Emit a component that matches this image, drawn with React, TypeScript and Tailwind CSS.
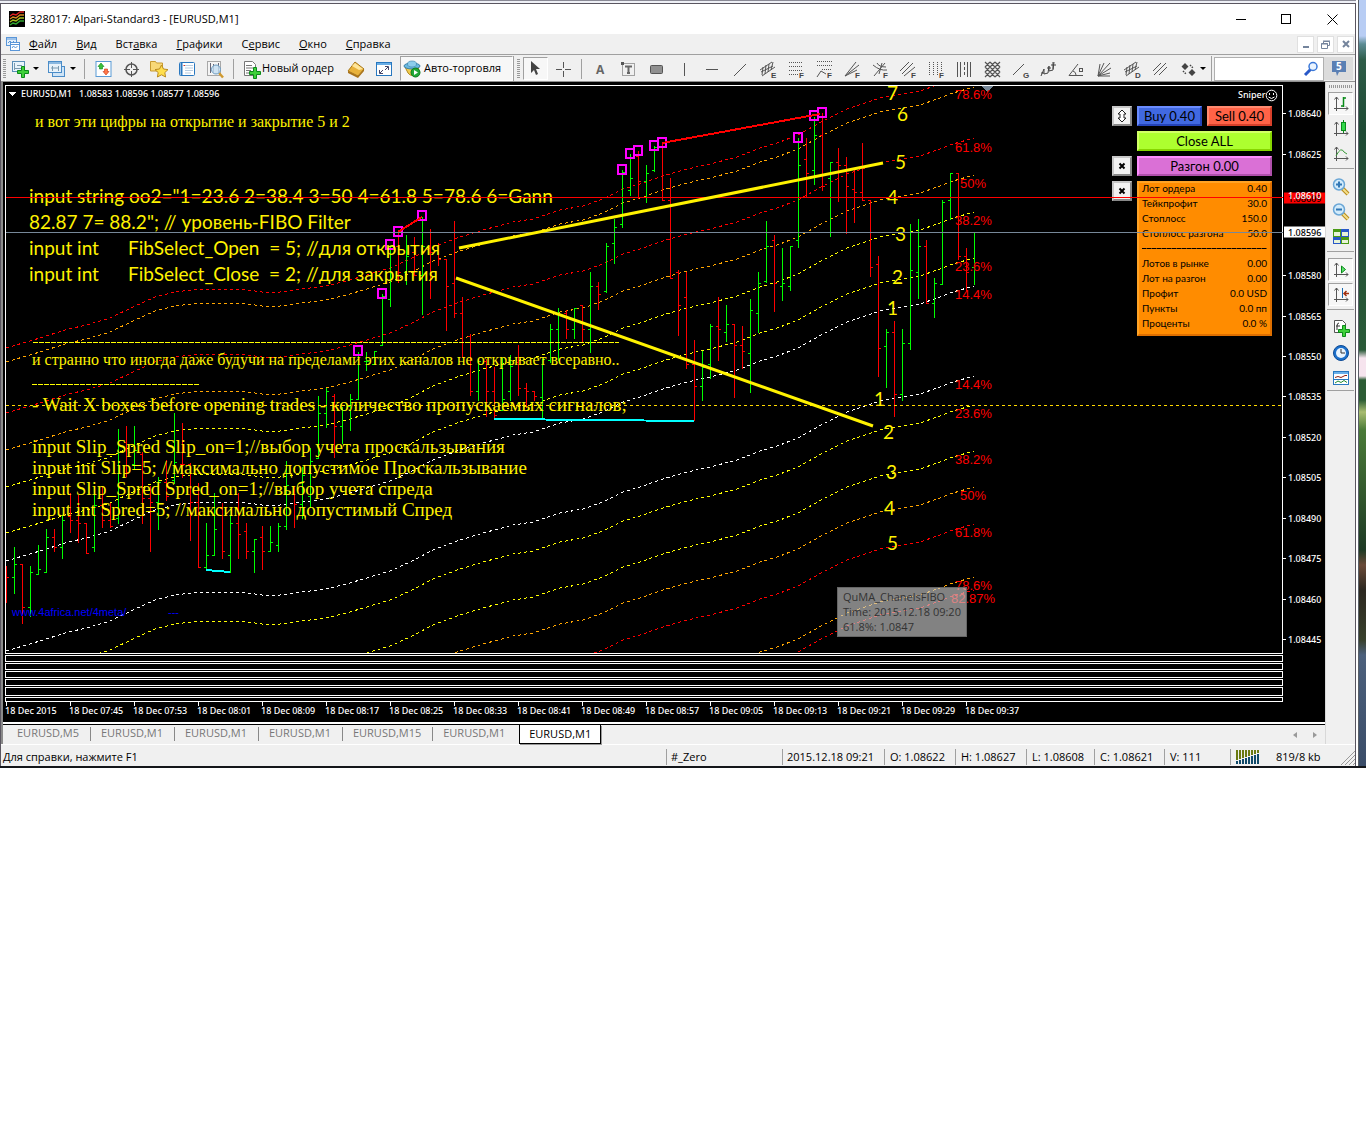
import React from "react";

/* ---------- chart data (canvas coordinates) ---------- */

const BASE: [number, number][] = [
  [6, 651], [40, 641], [65, 633], [90, 627], [110, 621], [135, 609], [155, 600], [175, 595], [200, 592], [218, 592],
  [240, 592], [262, 595], [280, 595], [300, 592], [320, 590], [343, 585], [370, 577], [390, 571], [410, 562],
  [433, 550], [457, 541], [483, 533], [513, 525], [533, 522], [560, 513], [583, 509], [603, 502], [623, 492],
  [640, 487], [660, 480], [683, 473], [710, 467], [737, 460], [760, 451], [780, 445], [800, 437], [823, 424],
  [847, 412], [880, 401], [920, 394], [940, 387], [953, 382], [974, 376],
];

const CHANNELS: [number, string][] = [
  [-303, "#f00"], [-289, "#ffa500"], [-238, "#f00"], [-201, "#ffa500"], [-164, "#ff0"], [-118, "#ff0"], [-90, "#fff"],
  [0, "#fff"], [29, "#ff0"], [75, "#ff0"], [111, "#ffa500"], [148, "#f00"], [201, "#ffa500"], [214, "#f00"],
];

/* colour, high, low, open, close; one bar every 8px */
type Bar = ["r" | "g", number, number, number, number];
const BARS: Bar[] = [
  ["r", 566, 602, 566, 577], ["g", 547, 593, 577, 564], ["r", 564, 623, 564, 607], ["g", 566, 616, 607, 572],
  ["g", 545, 574, 574, 569], ["g", 529, 572, 572, 537], ["r", 529, 551, 537, 547], ["g", 515, 558, 547, 520],
  ["r", 493, 532, 516, 520], ["r", 495, 542, 520, 523], ["r", 523, 553, 523, 553], ["g", 486, 551, 547, 505],
  ["r", 487, 527, 505, 520], ["r", 503, 527, 520, 526], ["g", 429, 523, 518, 440], ["r", 426, 476, 442, 472],
  ["g", 426, 468, 464, 450], ["r", 452, 523, 454, 498], ["r", 486, 551, 498, 502], ["g", 477, 529, 502, 482],
  ["r", 460, 500, 482, 496], ["g", 413, 483, 480, 462], ["r", 423, 477, 464, 464], ["r", 463, 540, 464, 502],
  ["r", 483, 567, 502, 567], ["g", 523, 569, 567, 555], ["g", 493, 555, 555, 529], ["r", 503, 558, 508, 551],
  ["g", 515, 572, 555, 523], ["r", 493, 558, 523, 534], ["r", 523, 558, 531, 551], ["g", 539, 572, 551, 539],
  ["r", 526, 569, 537, 551], ["g", 526, 551, 551, 542], ["g", 523, 551, 545, 526], ["g", 461, 529, 526, 485],
  ["r", 486, 527, 486, 504], ["g", 467, 518, 504, 475], ["g", 448, 507, 496, 461], ["g", 396, 458, 458, 413],
  ["g", 388, 427, 413, 391], ["r", 394, 457, 396, 426], ["g", 407, 443, 426, 410], ["g", 394, 430, 406, 399],
  ["g", 352, 399, 399, 354], ["g", 352, 370, 361, 361], ["g", 351, 364, 364, 351], ["g", 294, 345, 345, 296],
  ["g", 246, 306, 299, 246], ["r", 232, 282, 246, 272], ["g", 235, 284, 272, 256], ["r", 237, 275, 252, 275],
  ["g", 217, 314, 275, 246], ["r", 229, 298, 246, 252], ["r", 243, 265, 250, 259], ["r", 259, 330, 259, 286],
  ["r", 221, 317, 283, 313], ["r", 297, 357, 313, 357], ["r", 334, 395, 336, 391], ["g", 359, 400, 391, 361],
  ["r", 359, 416, 361, 391], ["r", 367, 418, 391, 415], ["g", 358, 410, 410, 399], ["g", 355, 400, 391, 366],
  ["r", 345, 395, 362, 388], ["r", 383, 407, 388, 391], ["r", 391, 400, 391, 396], ["g", 359, 418, 397, 359],
  ["g", 324, 362, 360, 329], ["g", 308, 360, 329, 315], ["r", 310, 338, 313, 329], ["g", 308, 338, 329, 308],
  ["r", 305, 341, 305, 329], ["g", 272, 352, 329, 286], ["r", 282, 309, 286, 294], ["g", 243, 292, 291, 246],
  ["g", 219, 263, 243, 227], ["g", 170, 227, 224, 172], ["g", 154, 195, 190, 178], ["r", 151, 198, 156, 181],
  ["g", 165, 202, 181, 173], ["g", 146, 171, 170, 147], ["r", 143, 200, 147, 200], ["r", 178, 278, 200, 278],
  ["r", 270, 335, 272, 305], ["r", 272, 368, 297, 364], ["r", 340, 420, 364, 386], ["g", 351, 400, 386, 367],
  ["g", 324, 378, 364, 326], ["r", 297, 360, 326, 329], ["g", 305, 341, 332, 324], ["r", 324, 397, 324, 345],
  ["r", 326, 368, 345, 351], ["g", 299, 392, 353, 310], ["g", 272, 332, 313, 283], ["g", 221, 282, 281, 246],
  ["r", 235, 311, 240, 283], ["g", 248, 300, 286, 283], ["g", 246, 290, 286, 246], ["g", 138, 247, 240, 165],
  ["r", 138, 197, 159, 173], ["g", 117, 184, 170, 135], ["r", 113, 190, 135, 186], ["g", 162, 236, 178, 162],
  ["r", 148, 201, 162, 165], ["r", 157, 233, 165, 186], ["r", 168, 222, 189, 192], ["r", 143, 200, 192, 200],
  ["r", 200, 276, 200, 267], ["r", 256, 376, 264, 348], ["g", 329, 387, 346, 332], ["r", 321, 416, 332, 394],
  ["g", 329, 400, 394, 343], ["g", 224, 349, 343, 270], ["g", 219, 298, 272, 246], ["r", 240, 303, 246, 303],
  ["g", 278, 317, 303, 283], ["g", 200, 284, 284, 202], ["g", 173, 219, 200, 173], ["r", 173, 259, 173, 256],
  ["r", 248, 290, 256, 272], ["g", 232, 284, 267, 232],
];

const BOXES: [number, number][] = [
  [358, 351], [382, 294], [390, 245], [398, 232], [422, 216], [622, 170], [630, 154], [638, 151], [654, 146],
  [662, 143], [798, 138], [814, 116], [822, 113],
];

const SUBWINDOWS: [number, number][] = [[655, 6], [663, 6], [671, 6], [679, 6], [687, 8], [697, 4]];

const PRICES: [string, number][] = [
  ["1.08640", 113], ["1.08625", 154], ["1.08580", 275], ["1.08565", 316], ["1.08550", 356],
  ["1.08535", 396], ["1.08520", 437], ["1.08505", 477], ["1.08490", 518], ["1.08475", 558], ["1.08460", 599], ["1.08445", 639],
];

const DATES = [
  "18 Dec 2015", "18 Dec 07:45", "18 Dec 07:53", "18 Dec 08:01", "18 Dec 08:09", "18 Dec 08:17", "18 Dec 08:25",
  "18 Dec 08:33", "18 Dec 08:41", "18 Dec 08:49", "18 Dec 08:57", "18 Dec 09:05", "18 Dec 09:13", "18 Dec 09:21",
  "18 Dec 09:29", "18 Dec 09:37",
];

const LEVELS: [string, number, number][] = [
  ["78.6%", 955, 94], ["61.8%", 955, 147], ["50%", 960, 183], ["38.2%", 955, 220], ["23.6%", 955, 266],
  ["14.4%", 955, 294], ["14.4%", 955, 384], ["23.6%", 955, 413], ["38.2%", 955, 459], ["50%", 960, 495],
  ["61.8%", 955, 532], ["78.6%", 955, 585], ["82.87%", 951, 598],
];

const MARKS: [string, number, number][] = [
  ["7", 887, 92], ["6", 897, 113], ["5", 895, 161], ["4", 887, 196], ["3", 895, 233], ["2", 892, 276], ["1", 887, 307],
  ["1", 874, 398], ["2", 883, 431], ["3", 886, 471], ["4", 884, 507], ["5", 887, 542],
];

const calibri = "font-['Lato','Open_Sans',sans-serif]";
const serif = "font-['Liberation_Serif',serif]";
const small = "font-['Noto_Sans',sans-serif] text-[9px] font-medium";

const OX = 3;
const OY = 82;

function Label({ x, y, className, children }: { x: number; y: number; className: string; children: React.ReactNode }) {
  return (
    <span
      className={`absolute -translate-y-1/2 whitespace-pre leading-none ${className}`}
      style={{ left: x - OX, top: y - OY }}
    >
      {children}
    </span>
  );
}

function ChartPlot() {
  return (
    <svg className="absolute top-0 left-0" width="1322" height="640" viewBox="3 82 1322 640" shapeRendering="crispEdges">
      <defs>
        <clipPath id="plot"><rect x="6" y="86" width="1276" height="567" /></clipPath>
      </defs>
      <g clipPath="url(#plot)">
        <g fill="none" strokeDasharray="3 3">
          {CHANNELS.map(([o, c]) => (
            <polyline key={o} stroke={c} points={BASE.map(([x, y]) => `${x},${y + o}`).join(" ")} />
          ))}
        </g>
        {BARS.map(([c, h, l, o, cl], i) => {
          const x = 6 + i * 8;
          return (
            <path key={i} fill={c === "r" ? "#f00" : "#0f0"}
              d={`M${x} ${h}h1v${l - h + 1}h-1zM${x - 2} ${o}h2v1h-2zM${x + 1} ${cl}h2v1h-2z`} />
          );
        })}
        <g fill="none" stroke="#f0f" strokeWidth="2">
          {BOXES.map(([x, y]) => <rect key={x} x={x - 4} y={y - 5} width="8" height="9" />)}
        </g>
        <path d="M398 232L422 217M662 143L820 114" stroke="#f00" strokeWidth="2" />
        <path d="M494 419L694 421M206 570L230 572" stroke="#0ff" strokeWidth="2" />
      </g>
      <path d="M981 86h12l-6 6z" fill="#778899" />
      <g fill="none" stroke="#fff">
        <rect x="5.5" y="85.5" width="1277" height="568" />
        {SUBWINDOWS.map(([y, h]) => <rect key={y} x="5.5" y={y + 0.5} width="1277" height={h} />)}
        {PRICES.map(([p, y]) => <path key={p} d={`M1283 ${y + 0.5}h3`} />)}
        {DATES.map((d, i) => <path key={d} d={`M${6.5 + i * 64} 702v4`} />)}
      </g>
      <path d="M9 92h7l-3.500 4z" fill="#fff" />
    </svg>
  );
}

function ChartLines() {
  return (
    <svg className="pointer-events-none absolute top-0 left-0" width="1322" height="640" viewBox="3 82 1322 640">
      <g shapeRendering="crispEdges">
        <path d="M6 197.500H1283" stroke="#f00" />
        <path d="M6 232.500H1283" stroke="#778899" />
        <path d="M6 405.500H1283" stroke="#ffd700" strokeDasharray="3 3" />
        <path d="M33 342.500H619" stroke="#ff0" strokeDasharray="5 1" />
        <path d="M32 384.500H200" stroke="#ff0" strokeDasharray="5 1" />
      </g>
      <path d="M459 248L883 163M456 278L873 426" stroke="#fff200" strokeWidth="3" />
    </svg>
  );
}

const INFO: [string, string][] = [
  ["Лот ордера", "0.40"], ["Тейкпрофит", "30.0"], ["Стоплосс", "150.0"], ["Стоплосс разгона", "50.0"], ["", ""],
  ["Лотов в рынке", "0.00"], ["Лот на разгон", "0.00"], ["Профит", "0.0 USD"], ["Пункты", "0.0 пп"], ["Проценты", "0.0 %"],
];

function TradePanel() {
  const btn = "h-5 border-2 text-[13px] leading-none text-black";
  const mini = "flex h-5 w-5 items-center justify-center border-2 border-[#c8c8c8] border-r-[#888] border-b-[#888] bg-[#f2f2f2] text-black";
  const x = (
    <svg width="8" height="8" viewBox="0 0 8 8" stroke="#000" strokeWidth="2"><path d="M1.500 1.500l5 5M6.500 1.500l-5 5" /></svg>
  );
  return (
    <div className={`absolute top-6 left-[1109px] grid grid-cols-[20px_135px] gap-x-[5px] gap-y-[5px] ${calibri}`}>
      <button aria-label="Переместить" className={mini}>
        <svg width="12" height="14" viewBox="0 0 12 14" fill="#fff" stroke="#222"><path d="M6 1l4 4H8v4h2l-4 4-4-4h2V5H2z" /></svg>
      </button>
      <div className="grid grid-cols-2 gap-[5px]">
        <button className={`${btn} border-[#6a8cff] border-r-[#2443b8] border-b-[#2443b8] bg-[#4169e1]`}>Buy 0.40</button>
        <button className={`${btn} border-[#ff8a70] border-r-[#d8402a] border-b-[#d8402a] bg-[#ff6347]`}>Sell 0.40</button>
      </div>
      <span />
      <button className={`${btn} border-[#d2ff66] border-r-[#86d600] border-b-[#86d600] bg-[#adff2f]`}>Close ALL</button>
      <button aria-label="Скрыть разгон" className={mini}>{x}</button>
      <button className={`${btn} border-[#ff8cff] border-r-[#b050ac] border-b-[#b050ac] bg-[#da70d6]`}>Разгон 0.00</button>
      <button aria-label="Скрыть сведения" className={mini}>{x}</button>
      <div className="h-[155px] border-2 border-[#ffa326] border-r-[#de6f00] border-b-[#de6f00] bg-[#ff8c00] px-[3px]">
        <table className="w-full border-collapse text-[10px] leading-none text-black">
          <tbody>
            {INFO.map(([k, v], i) =>
              k ? (
                <tr key={i} className="h-[15px]">
                  <td className="p-0 align-top whitespace-nowrap">{k}</td>
                  <td className="p-0 text-right align-top whitespace-nowrap">{v}</td>
                </tr>
              ) : (
                <tr key={i} className="h-[15px]">
                  <td colSpan={2} className="p-0 align-top">
                    <div className="mt-[5px] h-px bg-[repeating-linear-gradient(90deg,#000_0_4px,#7a4300_4px_5px)]" />
                  </td>
                </tr>
              )
            )}
          </tbody>
        </table>
      </div>
    </div>
  );
}

function Chart() {
  const big = `${calibri} text-[19px] text-[#fff200]`;
  const code = `${serif} text-[19px] text-[#fff200]`;
  return (
    <div className="relative h-[640px] min-w-0 flex-1 overflow-hidden bg-black">
      <ChartPlot />
      <Label x={21} y={93} className={`${small} text-white`}>EURUSD,M1   1.08583 1.08596 1.08577 1.08596</Label>
      <Label x={1238} y={94} className={`${small} text-white`}>Sniper</Label>
      <svg className="absolute top-[7px] left-[1262px]" width="13" height="13" viewBox="0 0 13 13" fill="none" stroke="#fff">
        <circle cx="6.500" cy="6.500" r="5.300" /><path d="M4.500 4v2M8.500 4v2M3.500 8q3 3 6 0" />
      </svg>
      {PRICES.map(([p, y]) => <Label key={p} x={1288} y={y} className={`${small} text-white`}>{p}</Label>)}
      <Label x={1284} y={198} className={`${small} w-[42px] bg-[#f00] py-px pl-1 text-black`}>1.08609</Label>
      <Label x={1288} y={195} className={`${small} text-white`}>1.08610</Label>
      <Label x={1284} y={232} className={`${small} w-[42px] bg-white py-px pl-1 text-black`}>1.08596</Label>
      {DATES.map((d, i) => <Label key={d} x={5 + i * 64} y={710} className={`${small} text-white`}>{d}</Label>)}
      {LEVELS.map(([t, x, y], i) => (
        <Label key={i} x={x} y={y} className="font-['Liberation_Sans',sans-serif] text-[13px] text-[#f00]">{t}</Label>
      ))}
      {MARKS.map(([t, x, y], i) => <Label key={i} x={x} y={y} className={big}>{t}</Label>)}
      <Label x={35} y={122} className={`${serif} text-[16px] text-[#fff200]`}>и вот эти цифры на открытие и закрытие 5 и 2</Label>
      <Label x={29} y={195} className={big}>{'input string oo2="1=23.6 2=38.4 3=50 4=61.8 5=78.6 6=Gann'}</Label>
      <Label x={29} y={221} className={big}>{'82.87 7= 88.2"; // уровень-FIBO Filter'}</Label>
      <Label x={29} y={247} className={big}>{"input int      FibSelect_Open  = 5; //для открытия"}</Label>
      <Label x={29} y={273} className={big}>{"input int      FibSelect_Close  = 2; //для закрытия"}</Label>
      <Label x={32} y={360} className={`${serif} text-[16px] text-[#fff200]`}>и странно что иногда даже будучи на пределами этих каналов не открывает всеравно..</Label>
      <Label x={32} y={404} className={code}>- Wait X boxes before opening trades - количество пропускаемых сигналов;</Label>
      <Label x={32} y={446} className={code}>input Slip_Spred Slip_on=1;//выбор учета проскальзывания</Label>
      <Label x={32} y={467} className={code}>input int Slip=5; //максимально допустимое Проскальзывание</Label>
      <Label x={32} y={488} className={code}>input Slip_Spred Spred_on=1;//выбор учета спреда</Label>
      <Label x={32} y={509} className={code}>input int Spred=5; //максимально допустимый Спред</Label>
      <Label x={12} y={612} className="font-['Liberation_Sans',sans-serif] text-[11px] text-[#00f]">www.4africa.net/4meta/</Label>
      <Label x={168} y={612} className="font-['Liberation_Sans',sans-serif] text-[11px] text-[#00f]">---</Label>
      <TradePanel />
      <ChartLines />
      <div className="absolute top-[505px] left-[834px] h-[50px] w-[130px] border border-[#666] bg-[#c8c8c8]/65 pt-px pl-[5px] font-['Open_Sans',sans-serif] text-[11px] leading-[15px] whitespace-nowrap text-[#333]">
        <div>QuMA_ChanelsFIBO</div>
        <div>Time: 2015.12.18 09:20</div>
        <div>61.8%: 1.0847</div>
      </div>
    </div>
  );
}

/* ---------- icons ---------- */

function Ico({ children, s = 20 }: { children: React.ReactNode; s?: number }) {
  return <svg width={s} height={s} viewBox="0 0 20 20" fill="none" className="shrink-0">{children}</svg>;
}

/* 11px plus badge; x, y is the top left corner of its upper arm */
const plus = (x: number, y: number) => (
  <path d={`M${x + 0.5} ${y + 0.5}h3v4h4v3h-4v4h-3v-4h-4v-3h4z`} fill="#3fd03a" stroke="#0b8a1a" />
);

const glyph = (t: string) => (
  <text x="13" y="19" fontSize="8" fontWeight="700" fontFamily="Liberation Sans" fill="#444">{t}</text>
);

const G = "#555";
const TOOLS: { name: string; el: React.ReactNode }[] = [
  { name: "Текст", el: <text x="6" y="15" fontSize="12" fontWeight="700" fontFamily="Open Sans" fill="#666">A</text> },
  { name: "Текстовая метка", el: <><rect x="4.500" y="4.500" width="12" height="12" stroke={G} strokeDasharray="1 1" /><path d="M3 3h3v3H3z" fill={G} /><path d="M7 7.500h7M10.500 7v7M9 14h3" stroke="#666" strokeWidth="2" /></> },
  { name: "Прямоугольник", el: <rect x="4.500" y="6.500" width="12" height="8" rx="1" fill="#909090" stroke={G} /> },
  { name: "Вертикальная линия", el: <path d="M10.500 4v13" stroke={G} /> },
  { name: "Горизонтальная линия", el: <path d="M4 10.500h12" stroke={G} /> },
  { name: "Трендовая линия", el: <path d="M4 17L16 5" stroke={G} /> },
  { name: "Равноудаленный канал", el: <><path d="M2 11L14 3M4 17L17 8M5 8l-1 8M8 6l-1 9M11 5l-1 8M15 3l-2 8M3 13l12-6" stroke={G} />{glyph("E")}</> },
  { name: "Уровни Фибоначчи", el: <><path d="M3 3.500h14M3 7.500h14M3 11.500h14M3 15.500h9" stroke={G} strokeDasharray="1 1" />{glyph("F")}</> },
  { name: "Расширение Фибоначчи", el: <><path d="M3 2.500h15M3 6.500h15M8 10.500h10" stroke={G} strokeDasharray="1 1" /><path d="M3 18l4-6 5 3" stroke={G} />{glyph("F")}</> },
  { name: "Веер Фибоначчи", el: <><path d="M3 17L14 3M3 17L17 6M3 17l12-6" stroke={G} />{glyph("F")}</> },
  { name: "Дуги Фибоначчи", el: <><path d="M4 17L15 4M3 6q7 6 14 5M7 4q2 4 9 4M12 4l-3 11" stroke={G} />{glyph("F")}</> },
  { name: "Канал Фибоначчи", el: <><path d="M2 12L11 3M4 15L15 4M6 17L17 8" stroke={G} />{glyph("F")}</> },
  { name: "Временные зоны Фибоначчи", el: <><path d="M3.500 3v14M7.500 3v14M11.500 3v14M15.500 3v9" stroke={G} strokeDasharray="1 1" />{glyph("F")}</> },
  { name: "Циклические линии", el: <><path d="M3.500 3v15M6.500 3v15M13.500 3v15M16.500 3v15" stroke={G} /><path d="M10.500 3v15" stroke={G} strokeDasharray="3 2" /></> },
  { name: "Сетка Ганна", el: <path d="M3 8l5-5M3 13L13 3M3 18L18 3M8 18L18 8M13 18l5-5M3 13l5 5M3 8l10 10M3 3l15 15M8 3l10 10M13 3l5 5" stroke={G} strokeWidth="1.200" /> },
  { name: "Линия Ганна", el: <><path d="M3 16L14 5" stroke={G} />{glyph("G")}</> },
  { name: "Волны Эллиотта", el: <path d="M3 17l3-7v5l4-1 1-7v5l4-1 1-8M3 14h3M9 9h4M13 6h5M15 3v7" stroke="#444" /> },
  { name: "Угол", el: <><path d="M12 5L3 16.500h14M7 12q3 1 3 4" stroke={G} /><rect x="13.500" y="9.500" width="3" height="3" stroke={G} /></> },
  { name: "Веер Ганна", el: <path d="M4 17L6 5M4 17l6-13M4 17L16 4M4 17l13-8M4 17l12-3M4 17h12" stroke={G} /> },
  { name: "Канал отклонений", el: <><path d="M2 11L14 3M4 17L17 8M5 8l-1 8M8 6l-1 9M11 5l-1 8M15 3l-2 8M3 13l12-6" stroke={G} />{glyph("D")}</> },
  { name: "Вилы Эндрюса", el: <path d="M3 12L11 4M4 16L16 4M9 16l8-8" stroke={G} /> },
];

const PriceAxes = <path d="M5.500 3v14M3 14.500h14M3.500 5.500l2-2.500 2 2.500M15 12.500l2 2-2 2" stroke={G} />;

const LENS = (
  <>
    <path d="M11 11l6 6" stroke="#b98c1c" strokeWidth="4" />
    <path d="M12 12l5 5" stroke="#f4df8c" strokeWidth="2" />
    <circle cx="8" cy="7.500" r="5.500" fill="#d2ebfb" stroke="#6aa6d6" strokeWidth="1.500" />
  </>
);

const SIDE: ({ name: string; el: React.ReactNode; on?: boolean } | null)[] = [
  { name: "Бары", on: true, el: <>{PriceAxes}<path d="M12.500 3v10M10 12h2M13 4h2" stroke="#0a8a1a" strokeWidth="1.500" /></> },
  { name: "Японские свечи", el: <>{PriceAxes}<path d="M12.500 1v13" stroke="#0a8a1a" /><rect x="10.500" y="3.500" width="4" height="8" fill="#32d84a" stroke="#0a8a1a" /></> },
  { name: "Линия", el: <>{PriceAxes}<path d="M5 12q5-10 8-4l3 2" stroke="#3a9a3a" /></> },
  null,
  { name: "Приблизить", el: <>{LENS}<path d="M5 7.500h6M8 4.500v6" stroke="#3177b5" strokeWidth="2" /></> },
  { name: "Отдалить", el: <>{LENS}<path d="M5 7.500h6" stroke="#3177b5" strokeWidth="2" /></> },
  { name: "Упорядочить окна", el: <><path d="M2 2h8v8H2zM10 10h8v7h-8z" fill="#4a9a14" /><path d="M10 2h8v8h-8zM2 10h8v7H2z" fill="#2858c8" /><path d="M3 5h6v4H3zM11 5h6v4h-6zM3 13h6v3H3zM11 13h6v3h-6z" fill="#e8f4d8" /></> },
  null,
  { name: "Автопрокрутка", on: true, el: <>{PriceAxes}<path d="M10.500 6l4 3.500-4 3.500z" fill="#5ce06a" stroke="#0a8a1a" /></> },
  { name: "Сдвиг графика", on: true, el: <>{PriceAxes}<path d="M11.500 3v10" stroke="#1a6ab0" /><path d="M18 8.500h-5M15.500 6L13 8.500l2.500 2.500" stroke="#a03010" strokeWidth="1.500" /></> },
  null,
  { name: "Индикаторы", el: <><path d="M3.500 2.500h8l3 3v9h-11z" fill="#fff" stroke="#555" /><path d="M8 5q-2 0-2 3v4M5 8h4" stroke="#333" />{plus(11, 7)}</> },
  { name: "Периоды", el: <><circle cx="10" cy="10" r="7.500" fill="#1c70cc" stroke="#0d4a94" /><circle cx="10" cy="10" r="5" fill="#e8f4ff" /><path d="M10 6v4h4" stroke="#333" /></> },
  { name: "Шаблоны", el: <><rect x="2.500" y="3.500" width="15" height="13" fill="#fff" stroke="#2878c0" /><path d="M3 5h14" stroke="#6ab0ea" strokeWidth="2" /><path d="M4 9.500l3-1 3 1 4-2h2" stroke="#902010" /><path d="M3 11.500h14" stroke="#2878c0" /><path d="M4 15l3-2 3 1.500 3-2 3 2" stroke="#208a30" /></> },
];

function Grip() {
  return <span className="h-5 w-[3px] shrink-0 bg-[repeating-linear-gradient(#999_0_1px,transparent_1px_2px)]" />;
}
function Sep({ className = "" }: { className?: string }) {
  return <span className={`h-5 w-px shrink-0 bg-[#a0a0a0] ${className}`} />;
}
function Caret() {
  return <svg width="6" height="3" viewBox="0 0 6 3" className="shrink-0"><path d="M0 0h6L3 3z" fill="#000" /></svg>;
}

function ToolBtn({ name, children, className = "w-7" }: { name: string; children: React.ReactNode; className?: string }) {
  return <button aria-label={name} className={`flex h-[22px] shrink-0 items-center justify-center ${className}`}>{children}</button>;
}

function Toolbar() {
  return (
    <div className="flex h-[27px] items-center border-t border-[#a0a0a0] bg-[#f0f0f0] pt-px text-[11px]">
      <div className="flex shrink-0 items-center pl-0.5">
        <Grip />
        <ToolBtn name="Новый график" className="ml-1 w-5">
          <Ico><rect x="2.500" y="2.500" width="12" height="10" fill="#e8f4fc" stroke="#5a8fb8" /><path d="M4.500 4v7M7 6.500h5M4 9.500h9" stroke="#7a9ab0" />{plus(11, 7)}</Ico>
        </ToolBtn>
        <span className="ml-[3px] flex"><Caret /></span>
      </div>
      <ToolBtn name="Профили" className="ml-2 w-5">
        <Ico><rect x="5.500" y="7.500" width="12" height="10" fill="#cfe4f6" stroke="#4a8cc8" /><rect x="1.500" y="2.500" width="13" height="11" fill="#e8f2fa" stroke="#4a8cc8" /><path d="M2 4h12" stroke="#8ab8e0" strokeWidth="2" /><path d="M4 9h7M5.500 7v5M11.500 7v5" stroke="#7a9ab0" /></Ico>
      </ToolBtn>
      <span className="ml-[3px] flex"><Caret /></span>
      <Sep className="ml-2" />
      <ToolBtn name="Обзор рынка" className="ml-1 w-7">
        <Ico><rect x="3" y="2.500" width="15" height="15" fill="#fff" stroke="#5b9bd5" /><path d="M8 4l3 3.500H9.500V10h-3V7.500H5z" fill="#3cc03c" stroke="#0a8a1a" strokeWidth=".6" /><path d="M13 16l-3-3.500h1.500V10h3v2.500H16z" fill="#ff7848" stroke="#c83010" strokeWidth=".6" /></Ico>
      </ToolBtn>
      <ToolBtn name="Окно данных"><Ico><circle cx="10.500" cy="10.500" r="5.500" stroke={G} strokeWidth="1.500" /><path d="M10.500 3v6M10.500 12v6M3 10.500h6M12 10.500h6" stroke={G} /></Ico></ToolBtn>
      <ToolBtn name="Навигатор"><Ico><path d="M1.500 4V2.500h5l1 1.500h6v8h-12z" fill="#f8d878" stroke="#c89a30" /><path d="M12.500 6l2 4 4.500.6-3.200 3 .8 4.400-4.100-2.200L8.400 18l.8-4.400-3.200-3 4.500-.6z" fill="#ffdf4d" stroke="#b98a20" /></Ico></ToolBtn>
      <ToolBtn name="Терминал"><Ico><rect x="2.500" y="3.500" width="15" height="13" rx="1" fill="#fff" stroke="#2a78c0" /><path d="M4.500 4v12" stroke="#2a78c0" strokeWidth="2" /><path d="M8 6.500h8M8 9h8M8 11.500h8M8 14h6" stroke="#b8cce0" /><path d="M6.500 6.500h1.500" stroke="#e03020" /></Ico></ToolBtn>
      <ToolBtn name="Тестер стратегий"><Ico><rect x="2.500" y="2.500" width="13" height="14" fill="#f4f4f4" stroke="#a8a8a8" /><path d="M5.500 4v10M8.500 5v8M13.500 4v9" stroke="#667" /><path d="M14 14l4 4.500" stroke="#d09a30" strokeWidth="2.500" /><circle cx="11" cy="10.500" r="4.500" fill="#c4def2" fillOpacity=".8" stroke="#6a9ac0" /></Ico></ToolBtn>
      <Sep className="ml-1" />
      <button className="ml-2 flex shrink-0 items-center whitespace-nowrap">
        <Ico><path d="M2.500 2.500h8l3 3v11h-11z" fill="#fff" stroke="#777" /><path d="M4 6.500h6M4 9h7M4 11.500h5M4 14h4" stroke="#777" />{plus(11, 8)}</Ico>
        <span>Новый ордер</span>
      </button>
      <ToolBtn name="MetaEditor" className="ml-2 w-7"><Ico><path d="M2 12L9 3l9 7-6 7z" fill="#e8b23c" stroke="#a87818" /><path d="M9 4l8 6-4 1-7-4z" fill="#ffe69a" /><path d="M2 12l10 5 6-7v2l-6 7L2 14z" fill="#a8721a" /></Ico></ToolBtn>
      <ToolBtn name="Полный экран"><Ico><rect x="2.500" y="3.500" width="15" height="13" fill="#fff" stroke="#2878c0" /><path d="M3 5h14" stroke="#69aee6" strokeWidth="2" /><path d="M11 7.500h3.500V11M14 8l-3 3M9 14.500H5.500V11M6 14l3-3" stroke="#446" /></Ico></ToolBtn>
      <button className="ml-0.5 flex h-[25px] w-[113px] shrink-0 items-center gap-0.5 border border-[#a0a0a0] border-r-white border-b-white bg-[#f7f7f7] pl-px whitespace-nowrap">
        <Ico><path d="M3 8q7-4 14 0l-2 6q-5 5-9 0z" fill="#f2cd50" stroke="#b08a20" /><ellipse cx="10" cy="7" rx="8" ry="3" fill="#6ab8e0" stroke="#3880a8" /><ellipse cx="10" cy="5" rx="4.500" ry="3" fill="#8ccdec" stroke="#3880a8" strokeWidth=".6" /><circle cx="13.500" cy="13.500" r="4.500" fill="#22a838" stroke="#0a7a1a" /><path d="M12 11l4 2.500-4 2.500z" fill="#fff" /></Ico>
        <span>Авто-торговля</span>
      </button>
      <Sep className="h-[25px]" />
      <span className="ml-[3px] flex"><Grip /></span>
      <button aria-label="Курсор" className="ml-[3px] flex h-[23px] w-[25px] shrink-0 items-center justify-center border border-[#a0a0a0] border-r-white border-b-white bg-[#f7f7f7]">
        <svg width="11" height="16" viewBox="0 0 11 16"><path d="M1 0v12l3-3 2 5 2-1-2-5h4z" fill="#444" /></svg>
      </button>
      <ToolBtn name="Перекрестие" className="w-[31px]"><Ico><path d="M10.500 3v6M10.500 12v6M3 10.500h6M12 10.500h6" stroke={G} /></Ico></ToolBtn>
      <Sep className="ml-0.5" />
      <div className="ml-1 flex shrink-0">
        {TOOLS.map((t) => <ToolBtn key={t.name} name={t.name}><Ico>{t.el}</Ico></ToolBtn>)}
        <ToolBtn name="Стрелки" className="w-9"><Ico><path d="M7 4l3.500 3.500L7 11 3.500 7.500zM14 10l3.500 3.500L14 17l-3.500-3.500z" fill="#444" /><path d="M5 12l3 3M12 6l3 3" stroke="#444" strokeWidth="1.500" strokeDasharray="1.500 1" /></Ico><span className="ml-0.5"><Caret /></span></ToolBtn>
      </div>
      <span className="ml-auto h-[25px] w-px shrink-0 bg-[#a0a0a0]" />
      <label className="ml-0.5 flex h-[24px] w-[110px] shrink-0 items-center border border-[#b0b0b0] bg-white">
        <input aria-label="Поиск" className="h-4 w-[88px] bg-transparent px-1 outline-none" />
        <svg width="16" height="16" viewBox="0 0 16 16" fill="none"><path d="M2 14l6-6" stroke="#2858c8" strokeWidth="3" /><circle cx="10" cy="5.500" r="4" fill="#eaf4ff" stroke="#3a78d8" strokeWidth="1.500" /></svg>
      </label>
      <button aria-label="Сообщения" className="mr-0.5 flex h-[23px] w-[29px] shrink-0 items-center justify-center bg-[#dcdcdc]">
        <svg width="18" height="17" viewBox="0 0 18 17"><path d="M2 1h14v11H9l-2 4-1-4H2z" fill="#5b80b4" /><text x="6" y="10" fontSize="10" fontWeight="700" fill="#fff" fontFamily="Open Sans">5</text></svg>
      </button>
    </div>
  );
}

const MENU: [string, string, string][] = [
  ["", "Ф", "айл"], ["", "В", "ид"], ["Вст", "а", "вка"], ["", "Г", "рафики"], ["С", "е", "рвис"], ["", "О", "кно"], ["", "С", "правка"],
];

const TABS = ["EURUSD,M5", "EURUSD,M1", "EURUSD,M1", "EURUSD,M1", "EURUSD,M15", "EURUSD,M1"];

function AppLogo() {
  return (
    <svg width="16" height="16" viewBox="0 0 16 16" fill="none">
      <rect width="16" height="16" fill="#000" />
      <path d="M1 5l3-2 3 1 4-3h4" stroke="#e02020" strokeWidth="1.500" />
      <path d="M1 8l3-2 3 1 4-3h4" stroke="#d88820" strokeWidth="1.500" />
      <path d="M1 11l3-2 3 1 4-3h4" stroke="#a8c020" strokeWidth="1.500" />
      <path d="M1 14l3-2 3 1 4-3h4" stroke="#30a830" strokeWidth="1.500" />
    </svg>
  );
}

export default function App() {
  const mdi = "flex h-[17px] w-[17px] items-center justify-center border border-[#e0e0e0] bg-white";
  return (
    <div className="min-h-screen w-full overflow-x-hidden bg-white font-['Open_Sans','Noto_Sans',sans-serif] text-black">
      <div className="flex border-b-2 border-[#14161a]">
        <main className="flex min-w-0 flex-1 flex-col border-t border-[#8a8a96]">
          <div className="h-0.5 bg-[#eef0f6]" />
          <div className="border-t border-r border-l border-[#5a5660] bg-[#f0f0f0]">
            <header className="flex h-[30px] items-center bg-white pl-2">
              <AppLogo />
              <h1 className="ml-[5px] text-[11px] whitespace-nowrap">328017: Alpari-Standard3 - [EURUSD,M1]</h1>
              <div className="ml-auto flex">
                <button aria-label="Свернуть" className="flex h-7 w-[46px] items-center justify-center"><svg width="11" height="11"><path d="M0 5.500h10" stroke="#000" /></svg></button>
                <button aria-label="Развернуть" className="flex h-7 w-[45px] items-center justify-center"><svg width="11" height="11" fill="none"><rect x=".5" y=".5" width="9" height="9" stroke="#000" /></svg></button>
                <button aria-label="Закрыть" className="flex h-7 w-[46px] items-center justify-center"><svg width="11" height="11"><path d="M.5.5l10 10M10.500.5l-10 10" stroke="#000" /></svg></button>
              </div>
            </header>
            <nav className="flex h-5 items-center pl-1 text-[11px]">
              <svg width="16" height="16" viewBox="0 0 16 16" fill="none" stroke="#5a96d8"><rect x="1.500" y="1.500" width="10" height="8" fill="#e4f0fc" /><path d="M1 3h11" /><path d="M3 7l2-2 2 2 2-2" /><rect x="5.500" y="6.500" width="9" height="8" fill="#fff" /><path d="M5 8.500h10M7 12l1.500-2 2 2 2-2" /></svg>
              <div className="ml-2 flex gap-[19px]">
                {MENU.map(([a, u, b]) => (
                  <button key={u + b} className="whitespace-nowrap">{a}<span className="underline">{u}</span>{b}</button>
                ))}
              </div>
              <div className="ml-auto flex gap-[3px] pr-px">
                <button aria-label="Свернуть график" className={mdi}><svg width="6" height="8"><path d="M0 7h6" stroke="#74849c" strokeWidth="2" /></svg></button>
                <button aria-label="Восстановить график" className={mdi}><svg width="9" height="9" fill="none" stroke="#74849c"><path d="M2.500 3V1.500h6v4H7M2 1h7" /><path d="M.5 3.500h6v5h-6zM0 4h7" /></svg></button>
                <button aria-label="Закрыть график" className={mdi}><svg width="8" height="8"><path d="M1 1l6 6M7 1L1 7" stroke="#74849c" strokeWidth="2" /></svg></button>
              </div>
            </nav>
            <Toolbar />
            <div className="flex border-t border-[#909090]">
              <div className="min-w-0 flex-1 border-l-2 border-[#8a8a8a]">
                <Chart />
                <div className="h-0.5 bg-white" />
                <div className="flex h-5 border-t border-black pl-3 text-[11px] text-[#777]" role="tablist">
                  {TABS.map((t, i) => (
                    <div key={i} className="flex items-start">
                      <button role="tab" aria-selected={false} className="h-[17px] px-0.5 whitespace-nowrap">{t}</button>
                      {i < 5 && <span className="mr-2 ml-[9px] mt-0.5 h-[14px] w-px bg-[#888]" />}
                    </div>
                  ))}
                  <button role="tab" aria-selected className="ml-3 h-[19px] border border-t-0 border-black bg-white px-[9px] whitespace-nowrap text-black shadow-[1px_1px_0_#999]">EURUSD,M1</button>
                  <div className="ml-auto flex items-center gap-4 pr-2">
                    <button aria-label="Назад"><svg width="4" height="6"><path d="M4 0v6L0 3z" fill="#999" /></svg></button>
                    <button aria-label="Вперед"><svg width="4" height="6"><path d="M0 0v6l4-3z" fill="#999" /></svg></button>
                  </div>
                </div>
              </div>
              <aside className="flex w-[30px] shrink-0 flex-col items-center border-l border-[#d8d8d8] pt-[3px]">
                <span className="mb-0.5 h-[3px] w-[23px] bg-[repeating-linear-gradient(90deg,#999_0_1px,transparent_1px_2px)]" />
                {SIDE.map((s, i) =>
                  s ? (
                    <button key={i} aria-label={s.name} className={s.on ? "mt-0.5 flex h-[23px] w-[25px] items-center justify-center border border-[#a0a0a0] border-r-white border-b-white bg-[#f7f7f7]" : "mt-0.5 flex h-[23px] w-[25px] items-center justify-center"}>
                      <Ico>{s.el}</Ico>
                    </button>
                  ) : <span key={i} className="mt-[3px] mb-1 h-px w-[27px] shrink-0 bg-[#a0a0a0]" />
                )}
                <span className="mt-px h-px w-[27px] bg-[#a0a0a0]" />
              </aside>
            </div>
            <footer className="flex h-[22px] items-center border-t border-white pt-[3px] text-[11px] whitespace-nowrap">
              <span className="flex-1 pl-0.5">Для справки, нажмите F1</span>
              <span className="w-[116px] border-l border-[#a0a0a0] pl-1">#_Zero</span>
              <span className="w-[102px] border-l border-[#a0a0a0] pl-1">2015.12.18 09:21</span>
              <span className="w-[71px] border-l border-[#a0a0a0] pl-[5px]">O: 1.08622</span>
              <span className="w-[71px] border-l border-[#a0a0a0] pl-[5px]">H: 1.08627</span>
              <span className="w-[68px] border-l border-[#a0a0a0] pl-[5px]">L: 1.08608</span>
              <span className="w-[70px] border-l border-[#a0a0a0] pl-[5px]">C: 1.08621</span>
              <span className="w-[66px] border-l border-[#a0a0a0] pl-[5px]">V: 111</span>
              <span className="flex w-[125px] items-center border-l border-[#a0a0a0] pl-[5px]">
                <svg width="24" height="14" viewBox="0 0 24 14" shapeRendering="crispEdges">
                  {[0, 1, 2, 3, 4, 5, 6, 7].map((i) => (
                    <g key={i}><rect x={i * 3} y="0" width="2" height={10 - i} fill="#6a7a10" /><rect x={i * 3} y={11 - i} width="2" height={3 + i} fill="#104a6a" /></g>
                  ))}
                </svg>
                <span className="ml-4">819/8 kb</span>
                <svg className="ml-auto self-end" width="14" height="14" fill="none" stroke="#999"><path d="M0 14L14 0M4 14L14 4M8 14l6-6M12 14l2-2" /></svg>
              </span>
            </footer>
          </div>
        </main>
        <div className="w-0.5 shrink-0 bg-white" />
        <div className="w-2 shrink-0 border-l border-[#5a6068] bg-[linear-gradient(#b8cdf4_0_36px,#5c8c94_44px,#2e5c48_60px,#1e4a34_130px,#2a5a38_350px,#f6e4ee_358px_376px,#2c5c34_380px_400px,#a8bc70_412px,#4a7a38_430px,#1e3a24_550px,#6a4a38_565px,#2c2820_590px,#38402c_640px,#4c607c_655px,#3a4c68_767px)]" />
      </div>
    </div>
  );
}
